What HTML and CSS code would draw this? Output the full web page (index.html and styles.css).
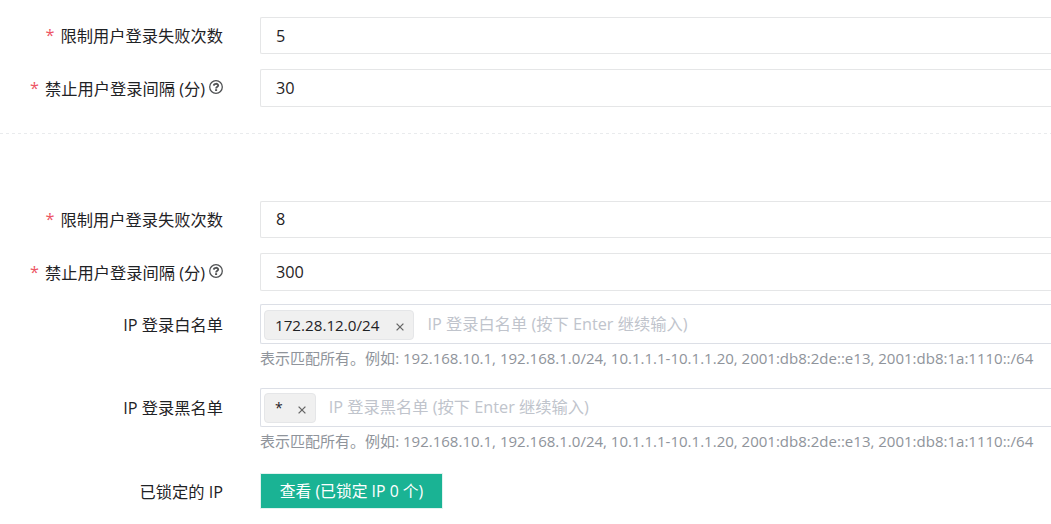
FILE: index.html
```html
<!DOCTYPE html>
<html lang="zh-CN">
<head>
<meta charset="utf-8">
<title>登录限制</title>
<link rel="stylesheet" href="styles.css">
</head>
<body>
<svg class="defs" width="0" height="0">
  <symbol id="help" viewBox="0 0 14 14"><circle cx="7" cy="7" r="6.3" fill="none" stroke="currentColor" stroke-width="1.3"/><path d="M4.8 5.6C4.9 3.3 9.2 3.2 9.2 5.5C9.2 6.9 7.1 6.7 7.1 8.5" fill="none" stroke="currentColor" stroke-width="1.9"/><path d="M6.1 9.2h2v1.8H6.1z" fill="currentColor"/></symbol>
  <symbol id="close" viewBox="0 0 8 8"><path d="M.6.6l6.8 6.8M7.4.6L.6 7.4" fill="none" stroke="currentColor" stroke-width="1.3"/></symbol>
</svg>
<form class="form">
  <section class="group">
    <div class="row">
      <label class="label"><span class="required">*</span><span>限制用户登录失败次数</span></label>
      <div class="input input-short">5</div>
    </div>
    <div class="row row-tall">
      <label class="label"><span class="required">*</span><span>禁止用户登录间隔 (分)</span><svg class="help-icon"><use href="#help"/></svg></label>
      <div class="input">30</div>
    </div>
  </section>
  <div class="divider"></div>
  <section class="group group-second">
    <div class="row">
      <label class="label"><span class="required">*</span><span>限制用户登录失败次数</span></label>
      <div class="input">8</div>
    </div>
    <div class="row row-tall">
      <label class="label"><span class="required">*</span><span>禁止用户登录间隔 (分)</span><svg class="help-icon"><use href="#help"/></svg></label>
      <div class="input">300</div>
    </div>
  </section>
  <div class="row row-tags">
    <label class="label">IP 登录白名单</label>
    <div class="tags-input"><span class="tag"><span class="tag-text">172.28.12.0/24</span><svg class="close-icon"><use href="#close"/></svg></span><span class="placeholder">IP 登录白名单 (按下 Enter 继续输入)</span></div>
  </div>
  <p class="hint">表示匹配所有。例如: 192.168.10.1, 192.168.1.0/24, 10.1.1.1-10.1.1.20, 2001:db8:2de::e13, 2001:db8:1a:1110::/64</p>
  <div class="row row-tags row-black">
    <label class="label">IP 登录黑名单</label>
    <div class="tags-input"><span class="tag"><span class="tag-text">*</span><svg class="close-icon"><use href="#close"/></svg></span><span class="placeholder">IP 登录黑名单 (按下 Enter 继续输入)</span></div>
  </div>
  <p class="hint">表示匹配所有。例如: 192.168.10.1, 192.168.1.0/24, 10.1.1.1-10.1.1.20, 2001:db8:2de::e13, 2001:db8:1a:1110::/64</p>
  <div class="row row-action">
    <label class="label">已锁定的 IP</label>
    <button class="button" type="button">查看 (已锁定 IP 0 个)</button>
  </div>
</form>
</body>
</html>
```
FILE: styles.css
```css
* { box-sizing: border-box; }
body {
  margin: 0;
  background: #fff;
  color: #1f2225;
  font: 16.25px/24px "Open Sans", "Noto Sans CJK SC", sans-serif;
  overflow: hidden;
}
.defs { display: block; }
.form { padding-top: 17px; white-space: nowrap; }
.group { display: flex; flex-direction: column; gap: 15px; }
.group-second { padding-top: 67px; }
.row {
  display: grid;
  grid-template-columns: 223px 1fr;
  grid-template-rows: 100%;
  column-gap: 37px;
  height: 37px;
}
.row-tall { height: 38px; }
.label {
  display: flex;
  align-items: center;
  justify-content: flex-end;
  padding-top: 1px;
}
.row-tall .label { padding-top: 2px; }
.required { color: #ed5565; margin-right: 6px; padding-bottom: 3px; }
.help-icon { width: 14px; height: 14px; margin: 0 0 4px 4px; color: #505254; }
.input {
  display: flex;
  align-items: center;
  padding: 0 15px 1px;
  border: 1px solid #e5e6e7;
  border-right: 0;
  border-radius: 2px 0 0 2px;
}
.input-short { padding-bottom: 0; }
.divider {
  height: 1px;
  margin-top: 26px;
  background: repeating-linear-gradient(90deg, #e9ebed 0 3px, transparent 3px 6px);
}
.row-tags { height: 40px; margin-top: 13px; }
.row-black { height: 39px; margin-top: 19px; }
.tags-input {
  display: flex;
  align-items: flex-start;
  padding: 5px 3px 0;
  border: 1px solid #dcdfe6;
  border-right: 0;
  border-radius: 2px 0 0 2px;
}
.row-black .tags-input { padding-top: 4px; }
.tag {
  display: flex;
  align-items: center;
  height: 30px;
  padding: 0 9px 0 10px;
  border: 1px solid #e5e6e8;
  border-radius: 4px;
  background: #f0f0f0;
  font-size: 15.2px;
}
.close-icon { width: 8px; height: 8px; margin: 3px 0 0 17px; color: #666; }
.row-black .close-icon { margin-left: 15px; }
.row-black .tag-text { font-size: 14px; }
.placeholder { margin: 2px 0 0 13px; color: #c0c4cc; }
.hint {
  margin: 3px 0 0 260px;
  color: #8f949b;
  font-size: 15.02px;
  line-height: 22px;
}
.row-action { height: 36px; margin-top: 21px; }
.button {
  width: 183px;
  height: 36px;
  padding: 0;
  border: 1px solid #e1f3ef;
  background: #1ab394;
  color: #fff;
  font: inherit;
  font-size: 15.8px;
}
```
